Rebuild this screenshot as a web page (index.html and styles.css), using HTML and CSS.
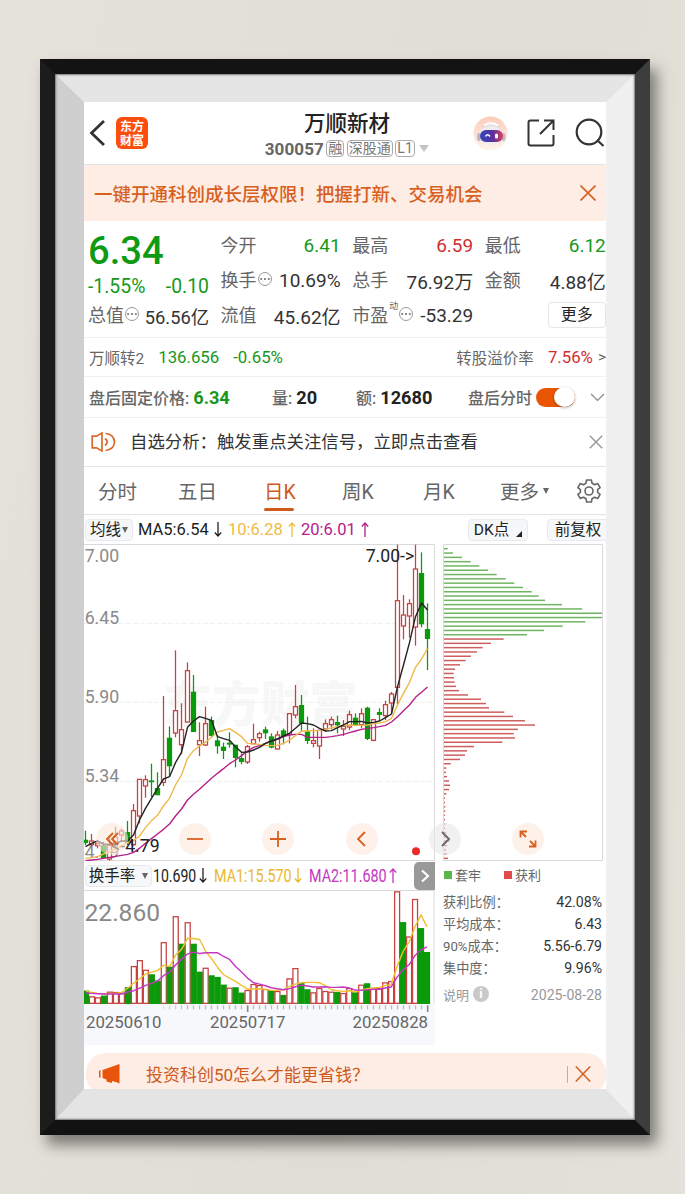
FILE: index.html
```html
<!DOCTYPE html>
<html lang="zh-CN">
<head>
    <meta charset="UTF-8">
    <meta name="viewport" content="width=device-width, initial-scale=1.0">
    <title>万顺新材 300057</title>
    <link rel="stylesheet" href="styles.css">
</head>
<body>

<div class="frame">
<div class="mat">
<div class="screen">

    <header class="header">
        <div class="header-left">
            <svg class="back" width="16" height="28" viewBox="0 0 16 28"><path d="M15 2L2.5 14L15 26" fill="none" stroke="#333" stroke-width="2.8"/></svg>
            <div class="logo"><span>东方</span><span>财富</span></div>
        </div>
        <div class="header-title">
            <h1>万顺新材</h1>
            <div class="code">
                <b>300057</b>
                <span class="tag">融</span>
                <span class="tag">深股通</span>
                <span class="tag">L1</span>
                <i class="tri"></i>
            </div>
        </div>
        <div class="header-right">
            <svg width="35" height="35" viewBox="0 0 35 35">
                <defs>
                    <linearGradient id="halo" x1="0" y1="0" x2="0" y2="1"><stop offset="0" stop-color="#fbcdb9"/><stop offset="1" stop-color="#fff4ef"/></linearGradient>
                    <linearGradient id="visor"><stop offset="0" stop-color="#3546b8"/><stop offset=".55" stop-color="#5a2fa0"/><stop offset="1" stop-color="#e0405c"/></linearGradient>
                </defs>
                <circle cx="17.5" cy="17.5" r="17" fill="url(#halo)"/>
                <ellipse cx="18" cy="12" rx="9" ry="5" fill="#e9dcd8"/>
                <ellipse cx="18" cy="19.500" rx="12" ry="9.500" fill="#efedf1"/>
                <ellipse cx="6" cy="21" rx="2" ry="4" fill="#b9b7c6"/>
                <ellipse cx="30.500" cy="21" rx="1.800" ry="4" fill="#b9b7c6"/>
                <path d="M11 9.500Q18 5 25 9.500" fill="none" stroke="#fff" stroke-width="2"/>
                <rect x="7" y="14" width="23" height="12" rx="6" fill="url(#visor)"/>
                <path d="M12.500 20.500Q14.500 17 17 20.500" fill="none" stroke="#fff" stroke-width="1.500"/>
                <rect x="22" y="17.500" width="3" height="5" rx="1.500" fill="#fff"/>
            </svg>
            <svg width="28" height="28" viewBox="0 0 28 28" fill="none" stroke="#333" stroke-width="2"><path d="M12 1.500H3.500Q1.500 1.500 1.500 3.500V24.500Q1.500 26.500 3.500 26.500H24.500Q26.500 26.500 26.500 24.500V16M17 1.500H26.500V11M26 2L13 15"/></svg>
            <svg width="30" height="30" viewBox="0 0 30 30" fill="none" stroke="#333" stroke-width="2.200"><circle cx="14" cy="14" r="12.300"/><path d="M22 22L28.500 28"/></svg>
        </div>
    </header>

    <div class="promo">
        <span>一键开通科创成长层权限！把握打新、交易机会</span>
        <svg width="16" height="16" viewBox="0 0 16 16"><path d="M.5 .5L15.500 15.500M15.500 .5L.5 15.500" stroke="#d8601f" stroke-width="1.600"/></svg>
    </div>

    <section class="quote">
        <div class="col">
            <div class="price">6.34</div>
            <div class="cell change"><em class="down">-1.55%</em><em class="down">-0.10</em></div>
            <div class="cell total"><span>总值<i class="dots"></i></span><em>56.56亿</em></div>
        </div>
        <div class="col">
            <div class="cell"><span>今开</span><em class="down">6.41</em></div>
            <div class="cell"><span>换手<i class="dots"></i></span><em>10.69%</em></div>
            <div class="cell"><span>流值</span><em>45.62亿</em></div>
        </div>
        <div class="col">
            <div class="cell"><span>最高</span><em class="up">6.59</em></div>
            <div class="cell"><span>总手</span><em>76.92万</em></div>
            <div class="cell"><span>市盈<sup>动</sup><i class="dots"></i></span><em>-53.29</em></div>
        </div>
        <div class="col">
            <div class="cell"><span>最低</span><em class="down">6.12</em></div>
            <div class="cell"><span>金额</span><em>4.88亿</em></div>
            <div class="cell"><button class="more">更多</button></div>
        </div>
    </section>

    <div class="bond">
        <span>万顺转2</span>
        <em class="down">136.656</em>
        <em class="down">-0.65%</em>
        <span class="push">转股溢价率</span>
        <em class="up">7.56%</em>
        <span class="gt">&gt;</span>
    </div>

    <div class="after">
        <div class="fixed-price">盘后固定价格: <b class="down">6.34</b></div>
        <div class="amount">量: <b>20</b></div>
        <div class="turnover">额: <b>12680</b></div>
        <div>盘后分时</div>
        <div class="switch"></div>
        <svg width="15" height="9" viewBox="0 0 15 9"><path d="M1 1L7.500 7.500L14 1" fill="none" stroke="#888" stroke-width="1.200"/></svg>
    </div>

    <div class="notice">
        <svg width="25" height="20" viewBox="0 0 25 20" fill="none" stroke="#d8692f" stroke-width="1.700"><path d="M11 1V19L5.500 15.800H1.200V4.200H5.500ZM14 6.500Q18.500 10 14 13.500M14.500 1.500C26.500 2 26.500 18 14.500 18.500"/></svg>
        <span>自选分析：触发重点关注信号，立即点击查看</span>
        <svg width="14" height="14" viewBox="0 0 14 14"><path d="M.8 .8L13.200 13.200M13.200 .8L.8 13.200" stroke="#999" stroke-width="1.500"/></svg>
    </div>

    <nav class="tabs">
        <a>分时</a>
        <a>五日</a>
        <a class="active">日K</a>
        <a>周K</a>
        <a>月K</a>
        <a>更多<i class="caret"></i></a>
        <svg width="24" height="24" viewBox="0 0 24 24" fill="none" stroke="#666" stroke-width="1.600"><path d="M9.600 1H14.400L15 4.200L17.600 5.700L20.800 4.600L23.100 8.700L20.600 10.600V13.400L23.100 15.300L20.800 19.400L17.600 18.300L15 19.800L14.400 23H9.600L9 19.800L6.400 18.300L3.200 19.400L.9 15.300L3.400 13.400V10.600L.9 8.700L3.200 4.600L6.400 5.700L9 4.200Z" stroke-linejoin="round"/><circle cx="12" cy="12" r="4"/></svg>
    </nav>

    <div class="ma-row">
        <button class="chip">均线<i class="caret"></i></button>
        <span class="ma5">MA5:6.54<svg class="arrow" viewBox="0 0 8 15"><path d="M4 0V14M.8 10.500L4 14L7.200 10.500"/></svg></span>
        <span class="ma10">10:6.28<svg class="arrow" viewBox="0 0 8 15"><path d="M4 15V1M.8 4.500L4 1L7.200 4.500"/></svg></span>
        <span class="ma20">20:6.01<svg class="arrow" viewBox="0 0 8 15"><path d="M4 15V1M.8 4.500L4 1L7.200 4.500"/></svg></span>
        <button class="chip dk">DK点<i class="corner"></i></button>
        <button class="chip adj">前复权</button>
    </div>

    <main class="charts">
        <div class="left">
            <svg class="kline" viewBox="12 12 1053 951">
                <text class="watermark" x="250" y="546">东方财富</text>
                <path class="grid" d="M12 250H1065M12 487H1065M12 724H1065"/>
                <path class="border" d="M12 13.500H1063.500V961.500H12"/>
                <g class="axis-label">
                    <text x="14" y="67">7.00</text>
                    <text x="14" y="251">6.45</text>
                    <text x="14" y="488">5.90</text>
                    <text x="14" y="726">5.34</text>
                    <text x="14" y="954">4.79</text>
                </g>
                <g id="candles"></g>
                <g id="averages"></g>
                <text class="mark" x="857" y="65">7.00-&gt;</text>
                <text class="mark" x="94" y="936">&lt;-4.79</text>
                <circle cx="1008" cy="934" r="12" fill="#e92a26"/>
            </svg>
            <div class="indicator">
                <button class="chip">换手率<i class="caret"></i></button>
                <span class="narrow v0"><span>10.690</span><svg class="arrow" viewBox="0 0 8 15"><path d="M4 0V14M.8 10.500L4 14L7.200 10.500"/></svg></span>
                <span class="narrow v1"><span>MA1:15.570</span><svg class="arrow" viewBox="0 0 8 15"><path d="M4 0V14M.8 10.500L4 14L7.200 10.500"/></svg></span>
                <span class="narrow v2"><span>MA2:11.680</span><svg class="arrow" viewBox="0 0 8 15"><path d="M4 15V1M.8 4.500L4 1L7.200 4.500"/></svg></span>
                <div class="next"><svg width="10" height="14" viewBox="0 0 10 14"><path d="M2 1.500L8 7L2 12.500" fill="none" stroke="#fff" stroke-width="2.200"/></svg></div>
            </div>
            <svg class="volume" viewBox="12 105 1053 343">
                <path class="border" d="M12 106.500H1063.500V447"/>
                <g id="bars"></g>
                <g id="barAverages"></g>
                <text class="peak" x="12" y="197">22.860</text>
            </svg>
            <div class="dates">
                <svg id="ticks" viewBox="12 448 1053 30"></svg>
                <div class="date-row"><span>20250610</span><span>20250717</span><span>20250828</span></div>
            </div>
        </div>

        <div class="right">
            <svg class="chips" viewBox="24 12 480 951">
                <g id="chips"></g>
                <path class="border" d="M25.500 13.500H502.500V961.500H25.500Z"/>
            </svg>
            <div class="legend"><i class="sq trapped"></i><span>套牢</span><i class="sq profit"></i><span>获利</span></div>
            <dl>
                <div><dt>获利比例：</dt><dd>42.08%</dd></div>
                <div><dt>平均成本：</dt><dd>6.43</dd></div>
                <div><dt>90%成本：</dt><dd>5.56-6.79</dd></div>
                <div><dt>集中度：</dt><dd>9.96%</dd></div>
            </dl>
            <div class="explain"><span>说明<i class="info">i</i></span><em>2025-08-28</em></div>
        </div>

        <div class="controls">
            <span><svg viewBox="0 0 32 32"><path d="M17 10L11 16L17 22M22 10L16 16L22 22"/></svg></span>
            <span><svg viewBox="0 0 32 32"><path d="M8 16H24"/></svg></span>
            <span><svg viewBox="0 0 32 32"><path d="M8 16H24M16 8V24"/></svg></span>
            <span><svg viewBox="0 0 32 32"><path d="M19 9L12 16L19 23"/></svg></span>
            <span class="grey"><svg viewBox="0 0 32 32"><path d="M13 9L20 16L13 23"/></svg></span>
            <span><svg viewBox="0 0 32 32"><path d="M8.500 14.500V8.500H15M8.500 8.500L14 14M23.500 17.500V23.500H17M23.500 23.500L18 18"/></svg></span>
        </div>
    </main>

    <div class="banner">
        <svg width="24" height="20" viewBox="0 0 24 20" fill="#e8540c"><path d="M1 6.500H2.500V13.500H1ZM4.500 6L21.500 0V19.500L18.500 18.300L14 17V19L8.500 17.500V15.500L4.500 14Z"/></svg>
        <span>投资科创50怎么才能更省钱？</span>
        <i></i>
        <svg width="16" height="16" viewBox="0 0 16 16"><path d="M.8 .5L15.200 15.500M15.200 .5L.8 15.500" stroke="#d8601f" stroke-width="1.500"/></svg>
    </div>

</div>
</div>
</div>

<script src="script.js"></script>
</body>
</html>
```
FILE: styles.css
```css
* {
    box-sizing: border-box;
}
body {
    margin: 0;
    height: 1194px;
    overflow: hidden;
    padding: 59px 0 0 40px;
    background: linear-gradient(100deg, #e4e2da, #e0ddd4 60%, #e3e1d9);
    font-family: Roboto, "Noto Sans CJK SC", sans-serif;
    color: #333;
}
h1, dl, dd {
    margin: 0;
}
em, i {
    font-style: normal;
}
svg {
    flex: none;
    display: block;
}
button {
    font-family: inherit;
    color: #222;
}

/* picture frame */
.frame {
    width: 610px;
    height: 1076px;
    border: 15px solid;
    border-color: #131313 #3d3d3d #121212 #1c1c1c;
    box-shadow: 7px 10px 13px rgba(70, 70, 66, .65);
}
.mat {
    position: relative;
    height: 1046px;
    border-style: solid;
    border-width: 28px 29px 31px 29px;
    border-color: #e5e5e5 #f0f0f0 #e4e4e4 #cfcfcf;
}
/* thin shade where the mat meets the frame */
.mat::before {
    content: "";
    position: absolute;
    inset: -28px -29px -31px -29px;
    box-shadow: inset 0 0 2px 1px #777;
    pointer-events: none;
}
.screen {
    width: 522px;
    height: 987px;
    overflow: hidden;
    background: #fff;
}

/* header */
.header {
    display: grid;
    grid-template-columns: 175px 176px 171px;
    height: 63px;
    border-bottom: 1px solid #e3e3e3;
}
.header-left {
    display: flex;
    align-items: center;
    padding-left: 5px;
    gap: 11px;
}
.logo {
    width: 32px;
    height: 32px;
    border-radius: 6px;
    background: #fb4d0b;
    color: #fff;
    font: 700 12px/14px "Noto Sans CJK SC", sans-serif;
    display: flex;
    flex-direction: column;
    align-items: center;
    justify-content: center;
}
.header-title {
    display: flex;
    flex-direction: column;
    align-items: center;
}
.header-title h1 {
    margin: 7px 0 0 0;
    font-size: 21.500px;
    line-height: 30px;
    font-weight: 500;
    color: #222;
}
.code {
    display: flex;
    align-items: center;
    gap: 2.500px;
    height: 19px;
    font-size: 17px;
    color: #666;
}
.code b {
    letter-spacing: .1px;
}
.tag {
    height: 17px;
    padding: 0 1px;
    border: 1px solid #aaa;
    border-radius: 4px;
    font-size: 14px;
    line-height: 15px;
    color: #777;
}
.tri {
    margin-left: 2px;
    border: 5.500px solid transparent;
    border-top: 7px solid #c4c4c4;
    border-bottom: 0;
}
.header-right {
    display: flex;
    align-items: center;
    padding-left: 38px;
    gap: 20px;
}
.header-right svg:first-child {
    margin-right: -1px;
}

.promo {
    display: flex;
    align-items: center;
    justify-content: space-between;
    height: 56px;
    padding: 0 10px;
    background: #fdede4;
    color: #d8601f;
    font-size: 18.500px;
    font-weight: 500;
}

/* quote */
.quote {
    display: grid;
    grid-template-columns: 121px 120px 121px 121px;
    column-gap: 11.600px;
    height: 117px;
    padding: 7px 0 0 4px;
    border-bottom: 1px solid #f0f0f0;
    font-size: 18px;
}
.cell {
    display: flex;
    align-items: center;
    justify-content: space-between;
    height: 35px;
    color: #666;
    white-space: nowrap;
}
.cell span {
    display: flex;
    align-items: center;
    margin-top: -3px;
}
.cell em {
    font-size: 19px;
    color: #333;
}
.cell.total em {
    font-size: 18.300px;
}
.price {
    height: 41px;
    font-size: 38.200px;
    line-height: 47px;
    font-weight: 500;
    color: #0f9a14;
}
.cell.change {
    height: 29px;
    padding-top: 6px;
}
.change em {
    font-size: 19.400px;
}
.cell .down, .down, .after b.down {
    color: #17981b;
}
.cell .up, .up {
    color: #d0302f;
}
.dots {
    width: 14px;
    height: 14px;
    margin-left: 1px;
    border: 1.300px solid #999;
    border-radius: 50%;
    background: radial-gradient(circle, #888 1px, transparent 1.300px) center / 3.800px 100%;
}
sup {
    align-self: flex-start;
    margin: -1px 0 0 1px;
    font-size: 9px;
    line-height: 12px;
}
.more {
    width: 58px;
    height: 26px;
    margin: -2px 0 0 auto;
    padding: 0;
    border: 1px solid #e6e6e6;
    border-radius: 4px;
    background: #fff;
    font-size: 16px;
    line-height: 22px;
}

.bond {
    display: flex;
    align-items: center;
    height: 39px;
    padding: 0 0 1px 5px;
    border-bottom: 1px solid #f0f0f0;
    font-size: 15.500px;
    color: #666;
}
.bond em {
    margin-left: 14px;
    font-size: 16.800px;
}
.bond .push {
    margin-left: auto;
}
.bond .gt {
    margin-left: 5px;
}
.after {
    display: flex;
    align-items: center;
    height: 41px;
    padding: 0 1px 0 5px;
    border-bottom: 1px solid #f0f0f0;
    font-size: 16px;
    font-weight: 500;
    color: #666;
    white-space: nowrap;
}
.after b {
    font-size: 18.200px;
    color: #222;
}
.fixed-price {
    width: 183px;
}
.amount {
    width: 84px;
}
.turnover {
    width: 112px;
}
.switch {
    width: 39px;
    height: 19px;
    margin: 0 15px 0 4px;
    border-radius: 10px;
    background: #ea5504;
    display: flex;
    justify-content: flex-end;
    align-items: center;
}
.switch::after {
    content: "";
    width: 21px;
    height: 20px;
    border-radius: 50%;
    background: #fff;
    box-shadow: 0 1px 3px rgba(0, 0, 0, .3);
}
.notice {
    display: flex;
    align-items: center;
    height: 49px;
    padding: 0 3px 0 7px;
    border-bottom: 1px solid #e4e4e4;
    font-size: 17.400px;
}
.notice span {
    margin: -4px auto 0 14px;
}

/* period tabs */
.tabs {
    display: grid;
    grid-template-columns: 80px 86px 78px 81px 77px 77px 24px;
    align-items: center;
    height: 48px;
    padding-left: 14px;
    border-bottom: 1px solid #e4e4e4;
    font-size: 19.500px;
    color: #666;
}
.tabs a {
    display: flex;
    align-items: center;
    justify-self: start;
    height: 40px;
}
.tabs .active {
    position: relative;
    color: #cf5a1b;
}
.tabs .active::after {
    content: "";
    position: absolute;
    left: 0;
    right: 2px;
    bottom: 0;
    height: 3px;
    border-radius: 2px;
    background: #cf5a1b;
}
.caret {
    display: inline-block;
    margin-left: 4px;
    border: 3.500px solid transparent;
    border-top: 6px solid #666;
    border-bottom: 0;
}
.ma-row {
    display: flex;
    align-items: center;
    height: 29px;
    padding-left: 1px;
    font-size: 16.500px;
    overflow: hidden;
    white-space: nowrap;
}
.chip {
    display: flex;
    align-items: center;
    justify-content: center;
    flex: none;
    width: 48px;
    height: 22px;
    padding: 0;
    border: 1px solid #e8eaee;
    border-radius: 4px;
    background: #f6f7f9;
    font-size: 15.500px;
    line-height: 20px;
    white-space: nowrap;
}
.chip .caret {
    margin-left: 1px;
}
.arrow {
    display: inline-block;
    width: 8px;
    height: 15px;
    margin-left: 5px;
    vertical-align: -2px;
    fill: none;
    stroke: currentColor;
    stroke-width: 1.300;
}
.ma5 {
    width: 90px;
    padding-left: 5px;
    color: #222;
}
.ma10 {
    width: 73px;
    padding-left: 5px;
    color: #eebb45;
}
.ma20 {
    padding-left: 5px;
    color: #b5208a;
}
.dk {
    width: 60px;
    margin-left: auto;
}
.corner {
    align-self: flex-end;
    margin: 0 0 3px 7px;
    border-left: 6px solid transparent;
    border-bottom: 6px solid #222;
}
.adj {
    width: 66px;
    margin: 0 -7px 0 19px;
    padding-right: 4px;
}

/* charts */
.charts {
    position: relative;
    display: flex;
    height: 501px;
}
.left {
    width: 351px;
}
.kline {
    width: 351px;
    height: 317px;
}
.border {
    fill: none;
    stroke: #d9d9d9;
    stroke-width: 3;
}
.grid {
    fill: none;
    stroke: #efefef;
    stroke-width: 3;
    stroke-dasharray: 15 6;
}
.watermark {
    font-size: 146px;
    font-weight: 900;
    fill: #f7f7f7;
}
.axis-label {
    font-size: 53px;
    fill: #8a8a8a;
}
.mark {
    font-size: 53px;
    fill: #222;
}
.candle-up {
    fill: #fff;
    stroke: #c6413f;
    stroke-width: 3.800;
}
.candle-down {
    fill: #0a9a0a;
    stroke: #0a9a0a;
    stroke-width: 3.800;
}
.line {
    fill: none;
    stroke-width: 4.200;
    stroke-linejoin: round;
}
.indicator {
    display: flex;
    align-items: center;
    height: 29px;
    padding-left: 1px;
}
.indicator .chip {
    width: 67px;
}
.indicator .chip .caret {
    margin-left: 7px;
}
.narrow {
    display: flex;
    align-items: center;
    font-size: 18.500px;
}
.narrow > span {
    width: 45px;
    transform: scaleX(.76);
    transform-origin: left;
    white-space: nowrap;
}
.narrow .arrow {
    margin-left: 1px;
}
.v0 {
    margin-left: 1px;
    width: 61px;
    color: #222;
}
.v1 {
    width: 95px;
    color: #e9b92c;
}
.v2 {
    color: #c436c4;
}
.v1 > span, .v2 > span {
    width: 79px;
    transform: scaleX(.775);
}
.next {
    display: flex;
    align-items: center;
    justify-content: center;
    width: 21px;
    height: 28px;
    margin-left: auto;
    border-radius: 5px 0 0 5px;
    background: #999;
}
.volume {
    width: 351px;
    height: 114px;
}
.peak {
    font-size: 74px;
    fill: #888;
}
.dates {
    height: 41px;
    background: #f7f8fb;
}
#ticks {
    width: 351px;
    height: 10px;
}
.date-row {
    display: grid;
    grid-template-columns: 124px 1fr auto;
    margin-top: -1px;
    padding: 0 7px 0 2px;
    font-size: 16.800px;
    line-height: 18px;
    color: #666;
}

.right {
    width: 159px;
    margin-left: 8px;
    font-size: 13px;
    color: #666;
}
.chips {
    width: 160px;
    height: 317px;
}
.legend {
    display: flex;
    align-items: center;
    height: 27px;
}
.legend span {
    margin-top: -1px;
}
.sq {
    width: 8px;
    height: 8px;
    margin: 0 3px 0 1px;
}
.trapped {
    background: #5ab54a;
}
.profit {
    margin-left: 23px;
    background: #e14b4b;
}
dl {
    padding-top: 3px;
}
dl div {
    display: flex;
    justify-content: space-between;
    align-items: center;
    height: 22px;
}
dt {
    margin-top: -2px;
    font-size: 13.200px;
}
dd {
    font-size: 14.100px;
    color: #333;
}
.explain {
    display: flex;
    justify-content: space-between;
    align-items: center;
    margin-top: 6px;
    height: 20px;
    color: #999;
}
.explain span {
    display: flex;
    align-items: center;
    margin-top: -2px;
}
.explain em {
    font-size: 14.100px;
}
.info {
    width: 16px;
    height: 16px;
    margin-left: 4px;
    border-radius: 50%;
    background: #c9c9c9;
    color: #fff;
    font-weight: 700;
    line-height: 16px;
    text-align: center;
}

/* floating buttons over both charts */
.controls {
    position: absolute;
    left: 12px;
    top: 279px;
    display: flex;
    gap: 51.200px;
}
.controls span {
    width: 32px;
    height: 32px;
    border-radius: 50%;
    background: rgba(253, 232, 220, .6);
}
.controls svg {
    fill: none;
    stroke: #d8601f;
    stroke-width: 1.800;
}
.controls .grey {
    background: rgba(232, 232, 232, .6);
}
.controls .grey svg {
    stroke: #666;
}

.banner {
    display: flex;
    align-items: center;
    height: 42px;
    margin: 8px 0 0 2px;
    padding: 0 15px 0 12px;
    border-radius: 20px;
    background: #fdede4;
    color: #cf5a1b;
    font-size: 17px;
}
.banner span {
    margin: -2px auto 0 24px;
}
.banner i {
    width: 1px;
    height: 17px;
    margin-right: 7px;
    background: #e0a484;
}
```
FILE: script.js
```js
// [direction, high, low, body top, body bottom]
const candles = [
    ["g", 872, 915, 900, 908], ["r", 882, 920, 902, 915], ["r", 900, 925, 910, 918], ["g", 905, 955, 918, 953],
    ["r", 885, 962, 915, 958], ["r", 860, 920, 890, 910], ["r", 866, 905, 872, 886], ["g", 843, 915, 877, 908],
    ["r", 792, 917, 811, 915], ["r", 717, 850, 717, 829], ["r", 706, 773, 718, 739], ["g", 671, 771, 722, 726],
    ["g", 697, 765, 745, 765], ["r", 468, 738, 658, 728], ["g", 559, 710, 594, 678], ["r", 331, 592, 511, 580],
    ["r", 490, 643, 568, 615], ["r", 367, 547, 391, 547], ["g", 405, 575, 456, 575], ["r", 547, 648, 601, 615],
    ["r", 500, 618, 550, 616], ["g", 530, 590, 541, 587], ["g", 585, 641, 602, 618], ["g", 608, 657, 621, 632],
    ["g", 577, 623, 609, 613], ["g", 615, 682, 615, 653], ["g", 640, 673, 655, 665], ["r", 615, 672, 619, 667],
    ["r", 551, 612, 598, 612], ["r", 575, 605, 580, 594], ["g", 560, 597, 569, 579], ["g", 580, 625, 590, 622],
    ["r", 573, 628, 584, 628], ["g", 566, 613, 572, 587], ["r", 520, 610, 520, 583], ["r", 435, 535, 499, 526],
    ["g", 465, 575, 496, 550], ["g", 530, 612, 575, 602], ["r", 565, 622, 601, 611], ["r", 570, 657, 570, 619],
    ["r", 538, 575, 550, 568], ["r", 530, 568, 538, 555], ["g", 527, 580, 547, 555], ["r", 540, 588, 558, 568],
    ["r", 512, 570, 523, 562], ["g", 520, 558, 534, 556], ["r", 505, 565, 520, 555], ["g", 500, 600, 504, 596],
    ["r", 537, 604, 538, 602], ["g", 505, 543, 517, 524], ["r", 482, 540, 493, 528], ["r", 456, 520, 461, 490],
    ["r", 14, 495, 181, 443], ["r", 165, 298, 224, 259], ["r", 178, 293, 190, 229], ["r", 14, 317, 86, 262],
    ["g", 37, 262, 100, 252], ["g", 190, 390, 268, 296]
];

const ma5 = [920, 910, 903, 912, 913, 910, 903, 903, 885, 840, 805, 775, 745, 717, 710, 668, 637, 562, 543, 530,
    535, 541, 590, 596, 601, 620, 637, 636, 630, 622, 610, 603, 597, 588, 580, 565, 549, 551, 555, 565,
    573, 572, 563, 555, 545, 545, 544, 549, 547, 543, 533, 522, 440, 375, 308, 230, 189, 210];
const ma10 = [955, 953, 950, 942, 936, 926, 918, 908, 902, 888, 863, 842, 826, 798, 775, 735, 705, 655, 632, 617,
    607, 592, 576, 571, 566, 577, 590, 610, 612, 613, 616, 617, 616, 610, 600, 587, 573, 573, 572, 571,
    569, 563, 560, 557, 555, 556, 556, 555, 551, 549, 545, 535, 495, 460, 427, 382, 357, 326];
const ma20 = [962, 960, 958, 955, 952, 949, 946, 943, 937, 925, 910, 896, 882, 868, 852, 828, 807, 780, 763, 748,
    731, 715, 700, 686, 671, 660, 647, 633, 622, 617, 610, 603, 597, 590, 585, 583, 583, 592, 592, 592,
    592, 590, 587, 583, 578, 573, 568, 565, 563, 560, 556, 546, 530, 512, 495, 472, 457, 441];

const volumeColors = "grrgrrrgrrrggrgrgrgg" + "rgggrggrrrrgrgrrggrr" + "rrgrrgrgrrrrrgrrgg";
const volumeTops = [408, 425, 428, 423, 411, 412, 414, 398, 334, 316, 345, 359, 378, 262, 336, 184, 267, 202, 267, 351,
    339, 362, 367, 390, 399, 398, 414, 406, 388, 391, 403, 407, 409, 421, 371, 340, 385, 404, 413, 400,
    409, 411, 412, 415, 400, 413, 390, 386, 401, 400, 383, 379, 109, 202, 245, 132, 220, 292];
const volMa1 = [410, 413, 416, 417, 416, 416, 413, 400, 385, 372, 357, 352, 347, 331, 335, 300, 283, 250, 251, 254,
    290, 312, 338, 360, 370, 380, 392, 403, 403, 402, 404, 407, 407, 405, 395, 388, 384, 383, 383, 384,
    393, 405, 408, 410, 408, 412, 406, 402, 400, 398, 392, 390, 335, 290, 262, 215, 180, 216];
const volMa2 = [415, 416, 417, 418, 418, 418, 418, 412, 408, 400, 392, 386, 378, 362, 352, 330, 313, 297, 292, 296,
    294, 294, 294, 305, 314, 335, 352, 370, 384, 388, 393, 399, 402, 405, 402, 396, 391, 394, 397, 397,
    396, 398, 398, 397, 400, 406, 407, 405, 404, 404, 400, 397, 367, 345, 330, 302, 285, 276];

// cost distribution, right end of every bar
const trapped = [38, 54, 81, 107, 133, 159, 185, 212, 238, 264, 290, 311, 330, 381, 441, 502, 502, 451, 383, 327, 276];
const profit = [206, 168, 143, 126, 108, 92, 75, 60, 56, 57, 59, 63, 72, 99, 138, 153, 162, 208, 234, 270,
    300, 249, 236, 240, 202, 117, 96, 90, 75, 47, 34, 33, 36, 42, 45, 42, 34, 30, 30, 31,
    31, 30, 30, 31, 30, 34, 36, 44, 36, 33, 36, 39];

const x = i => 16.5 + i * 18;

function line(values, color) {
    const points = values.map((v, i) => x(i) + "," + v).join(" ");
    return `<polyline class="line" points="${points}" stroke="${color}"/>`;
}

document.getElementById("candles").innerHTML = candles.map(([dir, high, low, top, bottom], i) => {
    const cls = dir === "r" ? "candle-up" : "candle-down";
    return `<g class="${cls}"><path d="M${x(i)} ${high}V${low}"/>` +
        `<rect x="${x(i) - 6}" y="${top + 1}" width="12" height="${Math.max(bottom - top - 2, 1)}"/></g>`;
}).join("");

document.getElementById("averages").innerHTML = line(ma20, "#b5208a") + line(ma10, "#efb94a") + line(ma5, "#222");

document.getElementById("bars").innerHTML = volumeTops.map((top, i) => {
    const cls = volumeColors[i] === "r" ? "candle-up" : "candle-down";
    return `<rect class="${cls}" x="${x(i) - 7.5}" y="${top + 1.5}" width="15" height="${444.5 - top}"/>`;
}).join("");

document.getElementById("barAverages").innerHTML = line(volMa1, "#efc02f") + line(volMa2, "#c436c4");

let ticks = "";
for (let i = 13; i < 58; i++) {
    const long = i === 27 || i === 57;
    const opacity = Math.min(1, (i - 11) / 6);
    ticks += `<rect x="${x(i) - 2}" y="452" width="${long ? 5 : 4}" height="${long ? 20 : 12}" fill="${long ? "#888" : "#bbb"}" opacity="${opacity}"/>`;
}
document.getElementById("ticks").innerHTML = ticks;

document.getElementById("chips").innerHTML = trapped.concat(profit).map((end, i) => {
    const color = i < trapped.length ? "#6fb562" : "#cf5f5f";
    return `<rect x="25" y="${24 + i * 12.9}" width="${end - 25}" height="4.5" fill="${color}"/>`;
}).join("");
```
